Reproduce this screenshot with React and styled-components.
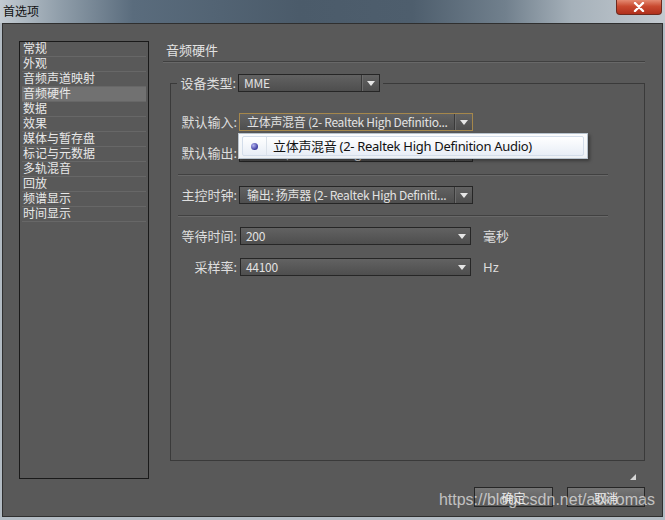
import React from 'react'
import styled, { createGlobalStyle } from 'styled-components'

const GlobalStyle = createGlobalStyle`
  html, body {
    margin: 0;
    padding: 0;
    background: #b9c2ca;
  }
  body {
    font-family: "Noto Sans", "Noto Sans CJK SC", sans-serif;
  }
`

const Window = styled.div`
  width: 665px;
  height: 520px;
  display: flex;
  flex-direction: column;
  background: #b3bcc4;
  overflow: hidden;
`

const TitleBar = styled.div`
  height: 23px;
  flex: none;
  display: flex;
  align-items: flex-start;
  justify-content: space-between;
  background: linear-gradient(90deg, #c3cbd2 0%, #909eaa 9%, #5a6c7d 20%, #4b5b6a 45%, #4e5e6d 62%, #71808d 76%, #a6b1ba 86%, #c3cad0 100%);
`

const Title = styled.div`
  padding: 3px 0 0 3px;
  font-family: "Noto Sans CJK SC", sans-serif;
  font-size: 12px;
  line-height: 16px;
  color: #111;
`

const CloseButton = styled.div`
  width: 46px;
  height: 15px;
  margin-right: 3px;
  box-sizing: border-box;
  display: flex;
  align-items: center;
  justify-content: center;
  border: 1px solid #6e2a1e;
  border-top: none;
  border-radius: 0 0 4px 4px;
  background: linear-gradient(#e48a72, #c94a30 45%, #b0301c 100%);
`

const Body = styled.div`
  position: relative;
  flex: 1;
  margin: 0 2px 3px;
  padding: 17px 17px 0 16px;
  display: flex;
  flex-direction: column;
  background: #595959;
  border: 1px solid #2f2f2f;
`

const Main = styled.div`
  display: grid;
  grid-template-columns: 130px 482px;
  column-gap: 14px;
  height: 438px;
`

const CategoryList = styled.ul`
  margin: 0;
  padding: 0 2px;
  list-style: none;
  box-sizing: border-box;
  border: 1px solid #1a1a1a;
`

const Category = styled.li`
  height: 15px;
  box-sizing: border-box;
  padding-left: 1px;
  font-size: 12px;
  line-height: 14px;
  color: #e8e8e8;
  border-bottom: 1px solid #676767;
  background: ${p => (p.$active ? '#717171' : 'transparent')};
`

const Panel = styled.section`
  display: flex;
  flex-direction: column;
`

const PanelHeading = styled.div`
  padding: 1px 0 3px 3px;
  font-size: 13px;
  line-height: 16px;
  color: #e2e2e2;
  border-bottom: 1px solid #404040;
  box-shadow: 0 1px 0 #686868;
`

const Group = styled.fieldset`
  margin: 12px 0 0 7px;
  padding: 0 0 0 6px;
  min-width: 0;
  height: 387px;
  box-sizing: border-box;
  border: 1px solid #3a3a3a;
`

const Legend = styled.legend`
  padding: 0 3px;
`

const LegendInner = styled.div`
  display: flex;
  align-items: center;
  gap: 2px;
`

const Row = styled.div`
  position: relative;
  display: flex;
  align-items: center;
  gap: ${p => p.$gap ?? 2}px;
  margin-top: ${p => p.$mt}px;
`

const FieldLabel = styled.span`
  flex: none;
  width: ${p => p.$w ?? 60}px;
  text-align: right;
  font-size: 13px;
  line-height: 18px;
  color: #dedede;
  white-space: nowrap;
`

const Combo = styled.div`
  flex: none;
  width: ${p => p.$w}px;
  height: 18px;
  box-sizing: border-box;
  display: flex;
  border: 1px solid ${p => (p.$focused ? '#a5874b' : '#262626')};
  background: linear-gradient(#626262, #4e4e4e);
  color: #e2e2e2;
  font-family: "Noto Sans CJK SC", sans-serif;
  font-size: 12px;
  letter-spacing: -0.3px;
`

const ComboText = styled.span`
  flex: 1;
  padding-left: ${p => p.$pad ?? 6}px;
  line-height: 16px;
  white-space: nowrap;
  overflow: hidden;
`

const ComboArrow = styled.span`
  flex: none;
  width: 17px;
  display: flex;
  align-items: center;
  justify-content: center;
  border-left: ${p => (p.$divider ? '1px solid #393939' : 'none')};
  box-shadow: ${p => (p.$divider ? 'inset 1px 0 0 #6c6c6c' : 'none')};

  &::after {
    content: '';
    border-left: 4px solid transparent;
    border-right: 4px solid transparent;
    border-top: 5px solid #e6e6e6;
  }
`

const Unit = styled.span`
  margin-left: 9px;
  font-size: 13px;
  line-height: 18px;
  color: #dedede;
`

const Divider = styled.div`
  margin: ${p => p.$mt}px 0 0 1px;
  width: 430px;
  border-top: 1px solid #414141;
  border-bottom: 1px solid #686868;
`

const Menu = styled.div`
  position: absolute;
  left: 61px;
  top: 20px;
  z-index: 2;
  width: 350px;
  height: 26px;
  box-sizing: border-box;
  padding: 2px 3px;
  background: linear-gradient(#fbfcfd, #edf1f5);
  border: 1px solid #b8c3ce;
  box-shadow: 2px 2px 3px rgba(0, 0, 0, 0.35);
`

const MenuItem = styled.div`
  height: 20px;
  box-sizing: border-box;
  display: flex;
  align-items: center;
  border: 1px solid #d3ddea;
  border-radius: 2px;
  background: linear-gradient(#ffffff, #e8eef6);
`

const Check = styled.span`
  flex: none;
  width: 24px;
  height: 100%;
  display: flex;
  align-items: center;
  justify-content: center;
  box-sizing: border-box;
  border-right: 1px solid #dbe2ea;
`

const Dot = styled.span`
  width: 7px;
  height: 7px;
  border-radius: 50%;
  background: radial-gradient(circle at 35% 35%, #b4b4f2, #3b3b9e 70%);
`

const MenuText = styled.span`
  padding-left: 6px;
  font-size: 13px;
  letter-spacing: -0.3px;
  line-height: 18px;
  color: #111;
  white-space: nowrap;
`

const Footer = styled.div`
  display: flex;
  justify-content: flex-end;
  gap: 14px;
  margin-top: 8px;
`

const Button = styled.button`
  width: ${p => p.$w}px;
  height: 20px;
  padding: 0;
  border: 1px solid #262626;
  background: linear-gradient(#767676, #5a5a5a);
  color: #ececec;
  font: 12px "Noto Sans CJK SC", sans-serif;
`

const Grip = styled.span`
  position: absolute;
  left: 627px;
  top: 450px;
  width: 0;
  height: 0;
  border-left: 6px solid transparent;
  border-bottom: 6px solid #d6d6d6;
`

const Watermark = styled.div`
  position: absolute;
  right: 7px;
  top: 467px;
  font-family: "Liberation Sans", Arial, sans-serif;
  font-size: 16px;
  line-height: 18px;
  color: rgba(235, 235, 235, 0.72);
  pointer-events: none;
`

const categories = [
  '常规', '外观', '音频声道映射', '音频硬件', '数据', '效果',
  '媒体与暂存盘', '标记与元数据', '多轨混音', '回放', '频谱显示', '时间显示',
]

const Select = ({ w, focused, divider = true, pad, children }) => (
  <Combo $w={w} $focused={focused}>
    <ComboText $pad={pad}>{children}</ComboText>
    <ComboArrow $divider={divider} />
  </Combo>
)

export default function App() {
  return (
    <>
      <GlobalStyle />
      <Window>
        <TitleBar>
          <Title>首选项</Title>
          <CloseButton>
            <svg width="12" height="10" viewBox="0 0 12 10">
              <path d="M2 1 L10 9 M10 1 L2 9" stroke="#fff" strokeWidth="2.4" strokeLinecap="round" />
            </svg>
          </CloseButton>
        </TitleBar>
        <Body>
          <Main>
            <CategoryList>
              {categories.map(c => (
                <Category key={c} $active={c === '音频硬件'}>{c}</Category>
              ))}
            </CategoryList>
            <Panel>
              <PanelHeading>音频硬件</PanelHeading>
              <Group>
                <Legend>
                  <LegendInner>
                    <FieldLabel $w={56}>设备类型:</FieldLabel>
                    <Select w={142} pad={5}>MME</Select>
                  </LegendInner>
                </Legend>

                <Row $mt={21}>
                  <FieldLabel>默认输入:</FieldLabel>
                  <Select w={234} focused pad={7}>立体声混音 (2- Realtek High Definitio...</Select>
                  <Menu>
                    <MenuItem>
                      <Check><Dot /></Check>
                      <MenuText>立体声混音 (2- Realtek High Definition Audio)</MenuText>
                    </MenuItem>
                  </Menu>
                </Row>
                <Row $mt={13}>
                  <FieldLabel>默认输出:</FieldLabel>
                  <Select w={234} pad={7}>扬声器 (2- Realtek High Definition...</Select>
                </Row>

                <Divider $mt={12} />

                <Row $mt={10}>
                  <FieldLabel>主控时钟:</FieldLabel>
                  <Select w={234} pad={7}>输出: 扬声器 (2- Realtek High Definiti...</Select>
                </Row>

                <Divider $mt={11} />

                <Row $mt={10} $gap={3}>
                  <FieldLabel>等待时间:</FieldLabel>
                  <Select w={231} divider={false} pad={5}>200</Select>
                  <Unit>毫秒</Unit>
                </Row>
                <Row $mt={13} $gap={3}>
                  <FieldLabel>采样率:</FieldLabel>
                  <Select w={231} divider={false} pad={5}>44100</Select>
                  <Unit>Hz</Unit>
                </Row>
              </Group>
            </Panel>
          </Main>
          <Footer>
            <Button $w={79}>确定</Button>
            <Button $w={78}>取消</Button>
          </Footer>
          <Grip />
          <Watermark>https://blog.csdn.net/acktomas</Watermark>
        </Body>
      </Window>
    </>
  )
}
